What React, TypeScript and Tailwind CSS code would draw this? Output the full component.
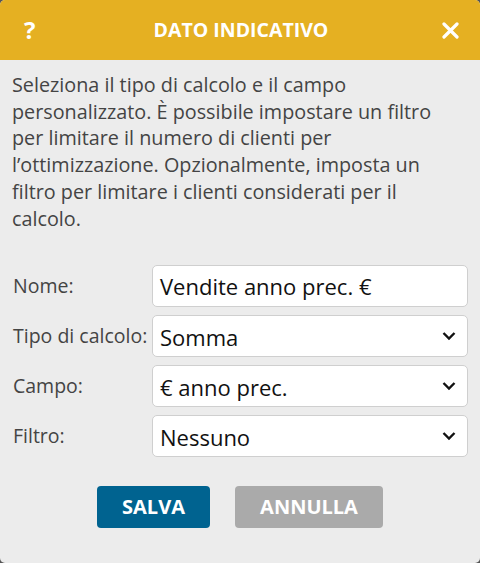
import React from 'react'

const Chevron = () => (
  <svg className="pointer-events-none absolute right-[11px] top-1/2 -translate-y-1/2" width="14" height="9" viewBox="0 0 14 9">
    <path d="M1.5 1.5 L7 7 L12.5 1.5" fill="none" stroke="#111" strokeWidth="2.4" />
  </svg>
)

const SelectField = ({ value }: { value: string }) => (
  <div className="relative h-[42px] flex-1 rounded-[5px] border border-[#cfcfcf] bg-white">
    <div className="flex h-full items-center pl-[7px] pt-[3px] text-[22px] text-[#111]">{value}</div>
    <Chevron />
  </div>
)

const Row = ({ label, children }: { label: string; children: React.ReactNode }) => (
  <div className="flex items-center">
    <span className="w-[139px] shrink-0 whitespace-nowrap pb-[1px] text-[19.5px] text-[#444]">{label}</span>
    {children}
  </div>
)

export default function App() {
  return (
    <div className="h-[563px] w-[480px] bg-[#555]" style={{ fontFamily: '"Open Sans", sans-serif' }}>
      <div className="flex h-full flex-col overflow-hidden rounded-[5px] bg-[#ececec]">
        <header className="flex h-[60px] shrink-0 items-center justify-between bg-[#e5b022] pl-[24px] pr-[22px] text-white">
          <span className="w-[20px] text-[24px] font-bold">?</span>
          <h1 className="text-[19.5px] font-bold">DATO INDICATIVO</h1>
          <div className="flex w-[20px] justify-end">
            <svg width="17" height="17" viewBox="0 0 17 17" className="mr-[-1px]">
              <path d="M2 2 L15 15 M15 2 L2 15" stroke="#fff" strokeWidth="3.2" strokeLinecap="round" />
            </svg>
          </div>
        </header>

        <p className="pl-[12px] pr-[26px] pt-[12px] text-[19.8px] leading-[26.7px] text-[#444]">
          Seleziona il tipo di calcolo e il campo personalizzato. È possibile impostare un filtro per limitare il numero di clienti per l’ottimizzazione. Opzionalmente, imposta un filtro per limitare i clienti considerati per il calcolo.
        </p>

        <div className="mt-[33px] flex flex-col gap-[8px] pl-[13px] pr-[12px]">
          <Row label="Nome:">
            <div className="flex h-[42px] flex-1 items-center rounded-[5px] border border-[#cfcfcf] bg-white pl-[7px] pt-[1px] text-[22px] text-[#111]">
              Vendite anno prec. €
            </div>
          </Row>
          <Row label="Tipo di calcolo:">
            <SelectField value="Somma" />
          </Row>
          <Row label="Campo:">
            <SelectField value="€ anno prec." />
          </Row>
          <Row label="Filtro:">
            <SelectField value="Nessuno" />
          </Row>
        </div>

        <div className="mt-[29px] flex justify-center gap-[25px]">
          <button className="h-[42px] w-[113px] rounded-[4px] bg-[#006390] text-[20px] font-bold text-white">SALVA</button>
          <button className="h-[42px] w-[148px] rounded-[4px] bg-[#aaaaaa] text-[20px] font-bold text-white">ANNULLA</button>
        </div>
      </div>
    </div>
  )
}
